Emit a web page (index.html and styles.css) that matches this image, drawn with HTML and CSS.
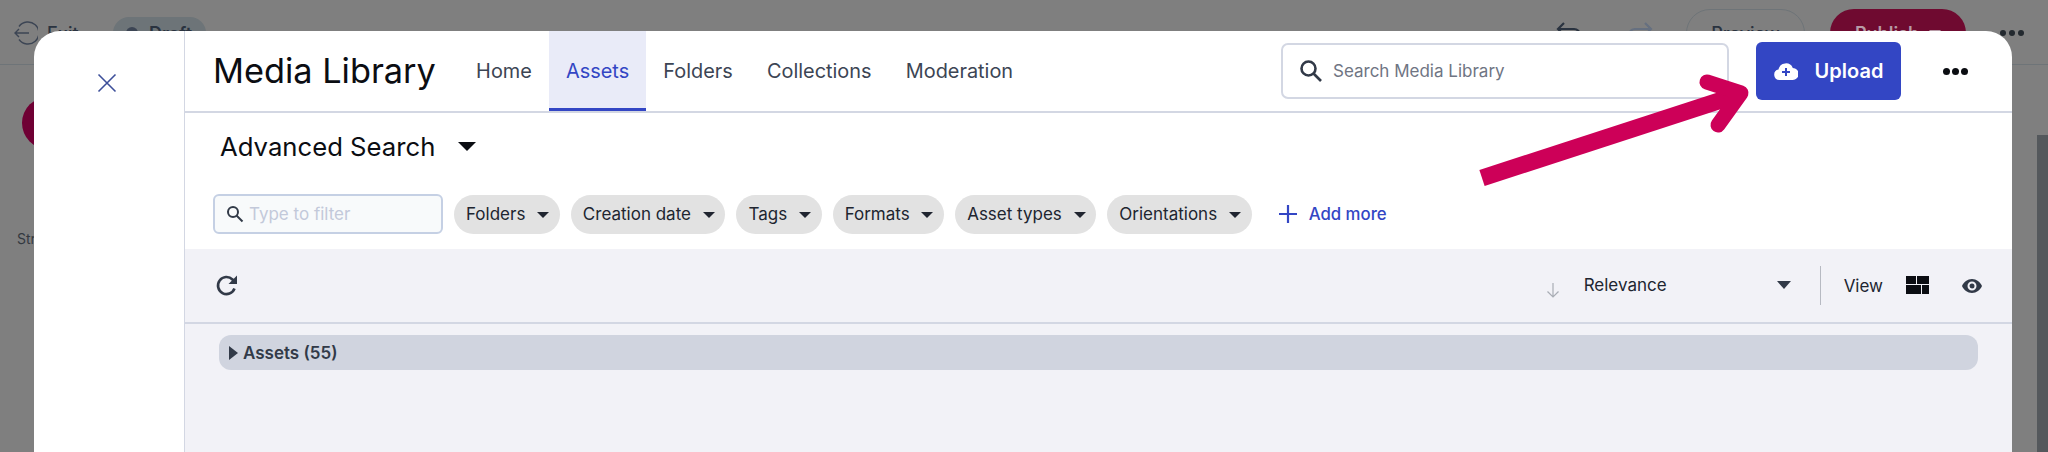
FILE: index.html
```html
<!DOCTYPE html>
<html lang="en">
<head>
<meta charset="utf-8">
<title>Media Library</title>
<link rel="stylesheet" href="styles.css">
</head>
<body>
<div class="page">
  <header class="bar">
    <div class="exit">
      <svg width="24" height="24" viewBox="0 0 24 24" fill="none" stroke="#3c4554" stroke-width="1.4"><path d="M5 5.5A11 11 0 1 1 5 18.500"/><path d="M15 12H1M5 8l-4 4 4 4"/></svg>
      <span>Exit</span>
    </div>
    <div class="draft"><i></i><span>Draft</span></div>
    <div class="bar-right">
      <svg class="undo" width="26" height="24" viewBox="0 0 26 24" fill="none" stroke="#2a3340" stroke-width="2.200"><path d="M8 2 2 8l6 6M2 8h16a6 6 0 0 1 0 12h-4"/></svg>
      <svg class="redo" width="26" height="24" viewBox="0 0 26 24" fill="none" stroke="#667080" stroke-width="2.200"><path d="m18 2 6 6-6 6M24 8H8a6 6 0 0 0 0 12h4"/></svg>
      <div class="preview">Preview</div>
      <div class="publish">Publish <b></b></div>
      <div class="bar-dots"><i></i><i></i><i></i></div>
    </div>
  </header>
  <div class="behind-circle"></div>
  <div class="behind-text">Structure</div>
  <div class="scroll"></div>

  <section class="modal">
    <aside class="rail">
      <svg width="22" height="22" viewBox="0 0 22 22" fill="none" stroke="#3d4f9a" stroke-width="1.600"><path d="M2.500 2.500l17 17M19.500 2.500l-17 17"/></svg>
    </aside>
    <main class="main">
      <div class="head">
        <h1 class="title">Media Library</h1>
        <nav class="tabs">
          <a class="tab">Home</a>
          <a class="tab active">Assets</a>
          <a class="tab">Folders</a>
          <a class="tab">Collections</a>
          <a class="tab">Moderation</a>
        </nav>
        <div class="search">
          <svg width="26" height="26" viewBox="0 0 26 26" fill="none" stroke="#323a48" stroke-width="2.600"><circle cx="10.500" cy="10.500" r="7"/><path d="m15.500 15.500 7.500 7.500"/></svg>
          <span>Search Media Library</span>
        </div>
        <div class="upload">
          <svg width="24" height="18" viewBox="0 0 24 18"><path fill="#fff" d="M5.500 18a5.300 5.300 0 0 1-1-10.500A7.500 7.500 0 0 1 18.800 6 6 6 0 0 1 18.500 18z"/><path stroke="#3346c4" stroke-width="2" d="M12 6v8M8 10h8"/></svg>
          <span>Upload</span>
        </div>
        <div class="dots"><i></i><i></i><i></i></div>
      </div>
      <div class="filters">
        <div class="adv"><span>Advanced Search</span><b class="caret-lg"></b></div>
        <div class="chips">
          <div class="filter-input">
            <svg width="18" height="18" viewBox="0 0 18 18" fill="none" stroke="#323a48" stroke-width="2"><circle cx="7" cy="7" r="5"/><path d="m10.500 10.500 6 6"/></svg>
            <span>Type to filter</span>
          </div>
          <div class="chip">Folders<b></b></div>
          <div class="chip">Creation date<b></b></div>
          <div class="chip">Tags<b></b></div>
          <div class="chip">Formats<b></b></div>
          <div class="chip">Asset types<b></b></div>
          <div class="chip">Orientations<b></b></div>
          <div class="add">
            <svg width="20" height="20" viewBox="0 0 20 20" stroke="#3346c4" stroke-width="2.200"><path d="M10 1v18M1 10h18"/></svg>
            <span>Add more</span>
          </div>
        </div>
      </div>
      <div class="results">
        <div class="toolbar">
          <svg class="refresh" width="24" height="24" viewBox="0 0 24 24" fill="none" stroke="#323a48" stroke-width="2.600"><path d="M19.500 14.500A8.500 8.500 0 1 1 17.500 5.500L20 8"/><path fill="#323a48" stroke="none" d="M22 1.500V10h-8.500z"/></svg>
          <svg class="sort" width="14" height="16" viewBox="0 0 14 16" fill="none" stroke="#a9adb5" stroke-width="1.200"><path d="M7 1v14M1.500 9.500 7 15l5.500-5.500"/></svg>
          <div class="rel"><span>Relevance</span><b></b></div>
          <div class="view">
            <span>View</span>
            <svg class="grid" width="23" height="18" viewBox="0 0 23 18" fill="#0b0d12"><path d="M0 0h10v8H0zM11 0h12v8H11zM0 9h15v9H0zM16 9h7v9h-7z"/></svg>
            <svg class="eye" width="20" height="14" viewBox="0 0 20 14"><path fill="#323a48" fill-rule="evenodd" d="M10 0c4.500 0 8.200 2.900 10 7-1.800 4.100-5.500 7-10 7S1.800 11.100 0 7c1.800-4.100 5.500-7 10-7zm0 2.500a4.500 4.500 0 1 0 0 9 4.500 4.500 0 0 0 0-9zM10 4.500a2.500 2.500 0 1 1 0 5 2.500 2.500 0 0 1 0-5z"/></svg>
          </div>
        </div>
        <div class="assets"><b></b><span>Assets (55)</span></div>
      </div>
    </main>
  </section>

  <svg class="arrow" width="300" height="140" viewBox="0 0 300 140" fill="none">
    <path d="M6 117 258 35" stroke="#cd0058" stroke-width="17"/>
    <path d="M231 21 265 32 242 64" stroke="#cd0058" stroke-width="15" stroke-linecap="round" stroke-linejoin="round"/>
  </svg>
</div>
</body>
</html>
```
FILE: styles.css
```css
* { box-sizing: border-box; }
html, body { margin: 0; height: 100%; overflow: hidden; }
body { font-family: Inter, "Liberation Sans", sans-serif; background: #808080; color: #0b0d12; }
.page { position: relative; width: 2048px; height: 452px; overflow: hidden; background: #7f7f7f; }

.bar { height: 65px; border-bottom: 1px solid #6e7478; display: flex; align-items: center; padding: 2px 24px 0 14px; color: #2a3340; font-size: 18px; font-weight: 500; }
.exit { display: flex; align-items: center; gap: 9px; width: 99px; }
.draft { width: 93px; height: 32px; border-radius: 16px; background: #6d7478; display: flex; align-items: center; gap: 11px; padding-left: 13px; font-weight: 600; }
.draft i { width: 12px; height: 12px; border-radius: 50%; background: #3c4554; }
.bar-right { margin-left: auto; display: flex; align-items: center; }
.undo { margin-right: 45px; }
.redo { margin-right: 33px; }
.preview { width: 119px; height: 48px; border: 1px solid #6e7478; border-radius: 24px; display: flex; align-items: center; justify-content: center; margin-right: 25px; }
.publish { width: 136px; height: 48px; border-radius: 24px; background: #6f0a30; color: #b79aa6; display: flex; align-items: center; justify-content: center; gap: 10px; font-weight: 600; margin-right: 34px; }
.publish b { border: 6px solid transparent; border-top: 7px solid #b79aa6; border-bottom: 0; }
.bar-dots { display: flex; gap: 3px; }
.bar-dots i { width: 6px; height: 6px; border-radius: 50%; background: #23292f; }
.behind-circle { position: absolute; left: 22px; top: 97px; width: 52px; height: 52px; border-radius: 50%; background: #6f0034; }
.behind-text { position: absolute; left: 17px; top: 230px; font-size: 14px; color: #33393f; }
.scroll { position: absolute; right: 0; top: 135px; width: 11px; height: 317px; background: #54585c; }

.modal { position: absolute; left: 34px; top: 31px; width: 1978px; height: 430px; background: #fff; border-radius: 26px 26px 0 0; display: flex; overflow: hidden; }
.rail { width: 151px; flex: none; border-right: 1px solid #d3d7e3; display: flex; justify-content: center; padding-top: 41px; padding-right: 5px; }
.rail svg { display: block; }
.main { flex: 1; min-width: 0; display: flex; flex-direction: column; }

.head { height: 82px; flex: none; border-bottom: 2px solid #d3d7e3; display: flex; align-items: center; padding-left: 28px; }
.title { margin: 0 31px 0 0; font-size: 34.300px; font-weight: 400; line-height: 1; width: 215px; white-space: nowrap; color: #0b0d12; }
.tabs { display: flex; align-self: stretch; }
.tab { display: flex; align-items: center; padding: 2px 17.100px 0; font-size: 19.900px; color: #3c4554; height: 80px; border-bottom: 3px solid transparent; white-space: nowrap; }
.tab.active { background: #e9ebf8; color: #3346c4; border-bottom-color: #3346c4; }
.search { margin-left: auto; width: 448px; height: 56px; border: 2px solid #d3d7e3; border-radius: 7px; display: flex; align-items: center; padding-left: 15px; gap: 9px; font-size: 17px; color: #6f7583; }
.upload { margin-left: 27px; width: 145px; height: 58px; border-radius: 6px; background: #3346c4; color: #fff; display: flex; align-items: center; justify-content: center; gap: 17px; font-size: 20px; font-weight: 600; }
.dots { margin-left: 42px; margin-right: 44px; display: flex; gap: 2px; }
.dots i { width: 7px; height: 7px; border-radius: 50%; background: #0b0d12; }

.filters { height: 136px; flex: none; padding: 0 0 0 28px; }
.adv { display: flex; align-items: center; height: 66px; padding-left: 7px; font-size: 25.700px; color: #0b0d12; }
.caret-lg { margin-left: 23px; border: 9px solid transparent; border-top: 9px solid #0b0d12; border-bottom: 0; }
.chips { margin-top: 15px; display: flex; align-items: center; gap: 11px; }
.filter-input { width: 230px; height: 40px; border: 2px solid #c5d0e4; border-radius: 6px; background: #f8fafb; display: flex; align-items: center; gap: 5px; padding-left: 11px; font-size: 17px; color: #c3c9da; }
.chip { height: 39px; border-radius: 20px; background: #e2e2e2; display: flex; align-items: center; gap: 11.800px; padding: 0 10.700px 0 12px; font-size: 17px; color: #202530; white-space: nowrap; }
.chip b { border: 6px solid transparent; border-top: 6px solid #202530; border-bottom: 0; margin-top: 2px; }
.add { display: flex; align-items: center; gap: 11px; margin-left: 15px; font-size: 16.800px; font-weight: 500; color: #3346c4; }

.results { flex: 1; background: #f2f2f7; }
.toolbar { height: 75px; border-bottom: 2px solid #d3d7e3; display: flex; align-items: center; padding: 0 30px 0 30px; }
.refresh { margin-top: 1px; }
.sort { margin-left: auto; margin-top: 8px; }
.rel { width: 223px; margin-left: 24px; display: flex; align-items: center; justify-content: space-between; font-size: 17px; color: #202530; padding-bottom: 1px; padding-right: 16px; }
.rel b { border: 7px solid transparent; border-top: 8px solid #323a48; border-bottom: 0; }
.view { height: 39px; border-left: 1px solid #b7bac2; padding-left: 23px; margin-left: 13px; display: flex; align-items: center; font-size: 17px; color: #202530; }
.grid { margin-left: 23px; margin-top: -2px; }
.eye { margin-left: 33px; }
.assets { margin: 11px 0 0 34px; width: 1759px; height: 35px; border-radius: 12px; background: #d0d4df; display: flex; align-items: center; padding-left: 10px; gap: 5px; font-size: 17px; font-weight: 600; color: #323a48; }
.assets b { border: 7px solid transparent; border-left: 9px solid #323a48; border-right: 0; }

.arrow { position: absolute; left: 1476px; top: 61px; }
```
